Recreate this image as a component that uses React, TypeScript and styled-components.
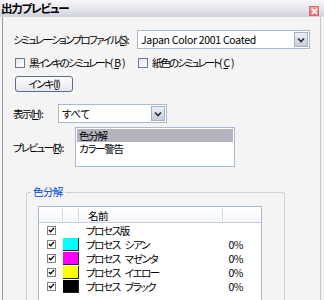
import styled, { createGlobalStyle } from "styled-components";

const GlobalStyle = createGlobalStyle`
  html, body {
    margin: 0;
    padding: 0;
    background: #f4f4f4;
  }
  body {
    font-family: "Noto Sans CJK JP", "Noto Sans", sans-serif;
    font-size: 10.5px;
    font-feature-settings: "palt";
    color: #000;
  }
`;

const plates = [
  { name: "プロセス版", color: null, percent: "" },
  { name: "プロセス シアン", color: "#00ffff", percent: "0%" },
  { name: "プロセス マゼンタ", color: "#ff00ff", percent: "0%" },
  { name: "プロセス イエロー", color: "#ffff00", percent: "0%" },
  { name: "プロセス ブラック", color: "#000000", percent: "0%" },
];

function Chevron() {
  return (
    <svg width="8" height="6" viewBox="0 0 8 6">
      <path d="M1 1.5 L4 4.5 L7 1.5" stroke="#2a2a3a" strokeWidth="1.6" fill="none" />
    </svg>
  );
}

function CheckMark() {
  return (
    <svg width="8" height="8" viewBox="0 0 8 8">
      <path d="M1 4 L3 6 L7 1.5" stroke="#000" strokeWidth="1.5" fill="none" />
    </svg>
  );
}

export default function App() {
  return (
    <Window>
      <GlobalStyle />
      <TitleBar>
        <Title>出力プレビュー</Title>
        <CloseButton>
          <svg width="7" height="7" viewBox="0 0 8 8">
            <path d="M1 1 L7 7 M7 1 L1 7" stroke="#fff" strokeWidth="1.8" />
          </svg>
        </CloseButton>
      </TitleBar>
      <Body>
        <FormRow>
          <Label width={124}>シミュレーションプロファイル(<u>S</u>):</Label>
          <Select width={173}>
            <SelectText>Japan Color 2001 Coated</SelectText>
            <DropButton>
              <Chevron />
            </DropButton>
          </Select>
        </FormRow>
        <CheckRow>
          <CheckLabel width={123}>
            <Box />
            黒インキのシミュレート(<u>B</u>)
          </CheckLabel>
          <CheckLabel>
            <Box />
            紙色のシミュレート(<u>C</u>)
          </CheckLabel>
        </CheckRow>
        <ButtonRow>
          <InkButton>
            インキ(<u>I</u>)
          </InkButton>
        </ButtonRow>
        <FormRow gap={12}>
          <Label width={45}>表示(<u>H</u>) :</Label>
          <Select width={109}>
            <SelectText>すべて</SelectText>
            <DropButton>
              <Chevron />
            </DropButton>
          </Select>
        </FormRow>
        <PreviewRow>
          <Label width={62}>プレビュー(<u>R</u>) :</Label>
          <ListBox>
            <ListItem selected>色分解</ListItem>
            <ListItem>カラー警告</ListItem>
          </ListBox>
        </PreviewRow>
        <GroupBox>
          <Legend>色分解</Legend>
          <PlateTable>
            <HeaderRow>
              <HeaderCell width={24} />
              <HeaderCell width={16} />
              <HeaderCell width={144} pad>
                名前
              </HeaderCell>
              <HeaderCell last />
            </HeaderRow>
            {plates.map((plate, idx) => (
              <PlateRow key={idx}>
                <CheckCell>
                  <SmallBox>
                    <CheckMark />
                  </SmallBox>
                </CheckCell>
                <SwatchCell>{plate.color && <Swatch color={plate.color} />}</SwatchCell>
                <NameCell>{plate.name}</NameCell>
                <PercentCell>{plate.percent}</PercentCell>
              </PlateRow>
            ))}
          </PlateTable>
        </GroupBox>
      </Body>
    </Window>
  );
}

const Window = styled.div`
  width: 324px;
  height: 300px;
  overflow: hidden;
  display: flex;
  flex-direction: column;
`;

const TitleBar = styled.div`
  height: 17px;
  flex-shrink: 0;
  display: flex;
  justify-content: space-between;
  padding: 0 5px 0 1px;
  background: linear-gradient(to bottom, #f8f8fb 0%, #e6e6ee 50%, #d2d2de 100%);
`;

const Title = styled.span`
  font-weight: 700;
  font-size: 11.5px;
  letter-spacing: -1.2px;
  line-height: 16px;
`;

const CloseButton = styled.div`
  width: 10px;
  height: 10px;
  box-sizing: border-box;
  align-self: flex-end;
  margin-bottom: 1px;
  display: flex;
  align-items: center;
  justify-content: center;
  background: linear-gradient(to bottom, #f4a4a4, #e26a6a);
  border: 1px solid #d46a6a;
`;

const Body = styled.div`
  flex: 1;
  margin: 0 3px 0 2px;
  padding: 13px 0 0 10px;
  border-left: 1px solid #9a9aa2;
  border-right: 1px solid #c8c8cc;
  display: flex;
  flex-direction: column;
  align-items: stretch;
`;

const FormRow = styled.div<{ gap?: number }>`
  display: flex;
  align-items: center;
  margin-top: ${(p) => p.gap ?? 0}px;
`;

const Label = styled.span<{ width?: number }>`
  width: ${(p) => (p.width ? `${p.width}px` : "auto")};
  flex-shrink: 0;
  white-space: nowrap;
  letter-spacing: -1.7px;
`;

const Select = styled.div<{ width: number }>`
  width: ${(p) => p.width}px;
  height: 19px;
  box-sizing: border-box;
  display: flex;
  align-items: center;
  justify-content: space-between;
  background: #fff;
  border: 1px solid #a9b8cc;
  padding: 1px;
`;

const SelectText = styled.span`
  padding-left: 2px;
  letter-spacing: -0.3px;
`;

const DropButton = styled.div`
  width: 14px;
  height: 15px;
  display: flex;
  align-items: center;
  justify-content: center;
  background: linear-gradient(to bottom, #eef0f6, #c8ccdc);
  border: 1px solid #a8aec4;
  box-sizing: border-box;
`;

const CheckRow = styled.div`
  display: flex;
  align-items: center;
  margin-top: 6px;
  padding-left: 2px;
`;

const CheckLabel = styled.span<{ width?: number }>`
  width: ${(p) => (p.width ? `${p.width}px` : "auto")};
  flex-shrink: 0;
  display: flex;
  align-items: center;
  gap: 3px;
  white-space: nowrap;
  letter-spacing: -2.1px;
`;

const Box = styled.span`
  width: 10px;
  height: 10px;
  flex-shrink: 0;
  margin-right: 1px;
  box-sizing: border-box;
  border: 1px solid #6a7a94;
  background: linear-gradient(135deg, #e6e6ea, #ffffff);
`;

const ButtonRow = styled.div`
  display: grid;
  grid-template-columns: 58px;
  margin-top: 6px;
  padding-left: 2px;
`;

const InkButton = styled.div`
  height: 16px;
  line-height: 14px;
  box-sizing: border-box;
  text-align: center;
  border: 1px solid #5a6c8c;
  border-radius: 3px;
  background: linear-gradient(to bottom, #ffffff, #e6e6ee);
  letter-spacing: -1.2px;
  white-space: nowrap;
`;

const PreviewRow = styled.div`
  display: flex;
  align-items: center;
  margin-top: 4px;
`;

const ListBox = styled.div`
  width: 160px;
  height: 40px;
  box-sizing: border-box;
  background: #fff;
  border: 1px solid #a9b8cc;
  padding: 1px;
  letter-spacing: -1.3px;
`;

const ListItem = styled.div<{ selected?: boolean }>`
  height: 13px;
  line-height: 13px;
  padding-left: 2px;
  background: ${(p) => (p.selected ? "#b4b4c0" : "transparent")};
`;

const GroupBox = styled.fieldset`
  margin: 19px 0 0 13px;
  width: 259px;
  box-sizing: border-box;
  padding: 8px 0 0 11px;
  border: 1px solid #d0d0d0;
  border-radius: 3px;
  border-bottom: none;
  flex: 1;
`;

const Legend = styled.legend`
  color: #0046d5;
  padding: 0 2px;
  margin-left: -7px;
  line-height: 12px;
  letter-spacing: -0.6px;
`;

const PlateTable = styled.div`
  width: 222px;
  background: #fff;
  border: 1px solid #a9b8cc;
  border-bottom: none;
  height: 120px;
`;

const HeaderRow = styled.div`
  display: flex;
  height: 15px;
  border-bottom: 1px solid #c6cede;
  background: linear-gradient(to bottom, #ffffff, #f6f7fa);
`;

const HeaderCell = styled.div<{ width?: number; pad?: boolean; last?: boolean }>`
  width: ${(p) => (p.width ? `${p.width}px` : "auto")};
  flex: ${(p) => (p.last ? 1 : "none")};
  padding-left: ${(p) => (p.pad ? "9px" : "0")};
  box-sizing: border-box;
  line-height: 15px;
  margin: 1px 0;
  border-right: ${(p) => (p.last ? "none" : "1px solid #d4d8e2")};
  letter-spacing: -0.6px;
`;

const PlateRow = styled.div`
  display: flex;
  align-items: center;
  height: 14px;
`;

const CheckCell = styled.div`
  width: 24px;
  display: flex;
  justify-content: center;
`;

const SmallBox = styled.span`
  width: 9px;
  height: 9px;
  box-sizing: border-box;
  border: 1px solid #808080;
  background: #fff;
  display: flex;
  align-items: center;
  justify-content: center;
`;

const SwatchCell = styled.div`
  width: 17px;
  height: 14px;
  display: flex;
  align-items: center;
`;

const Swatch = styled.span<{ color: string }>`
  width: 16px;
  height: 13px;
  box-sizing: border-box;
  background: ${(p) => p.color};
  border-right: 1px solid #222;
  border-bottom: 1px solid #222;
`;

const NameCell = styled.div`
  width: 144px;
  padding-left: 6px;
  box-sizing: border-box;
  white-space: pre;
  letter-spacing: -1.4px;
  word-spacing: 4px;
`;

const PercentCell = styled.div`
  width: 19px;
  text-align: right;
  letter-spacing: -0.5px;
`;
